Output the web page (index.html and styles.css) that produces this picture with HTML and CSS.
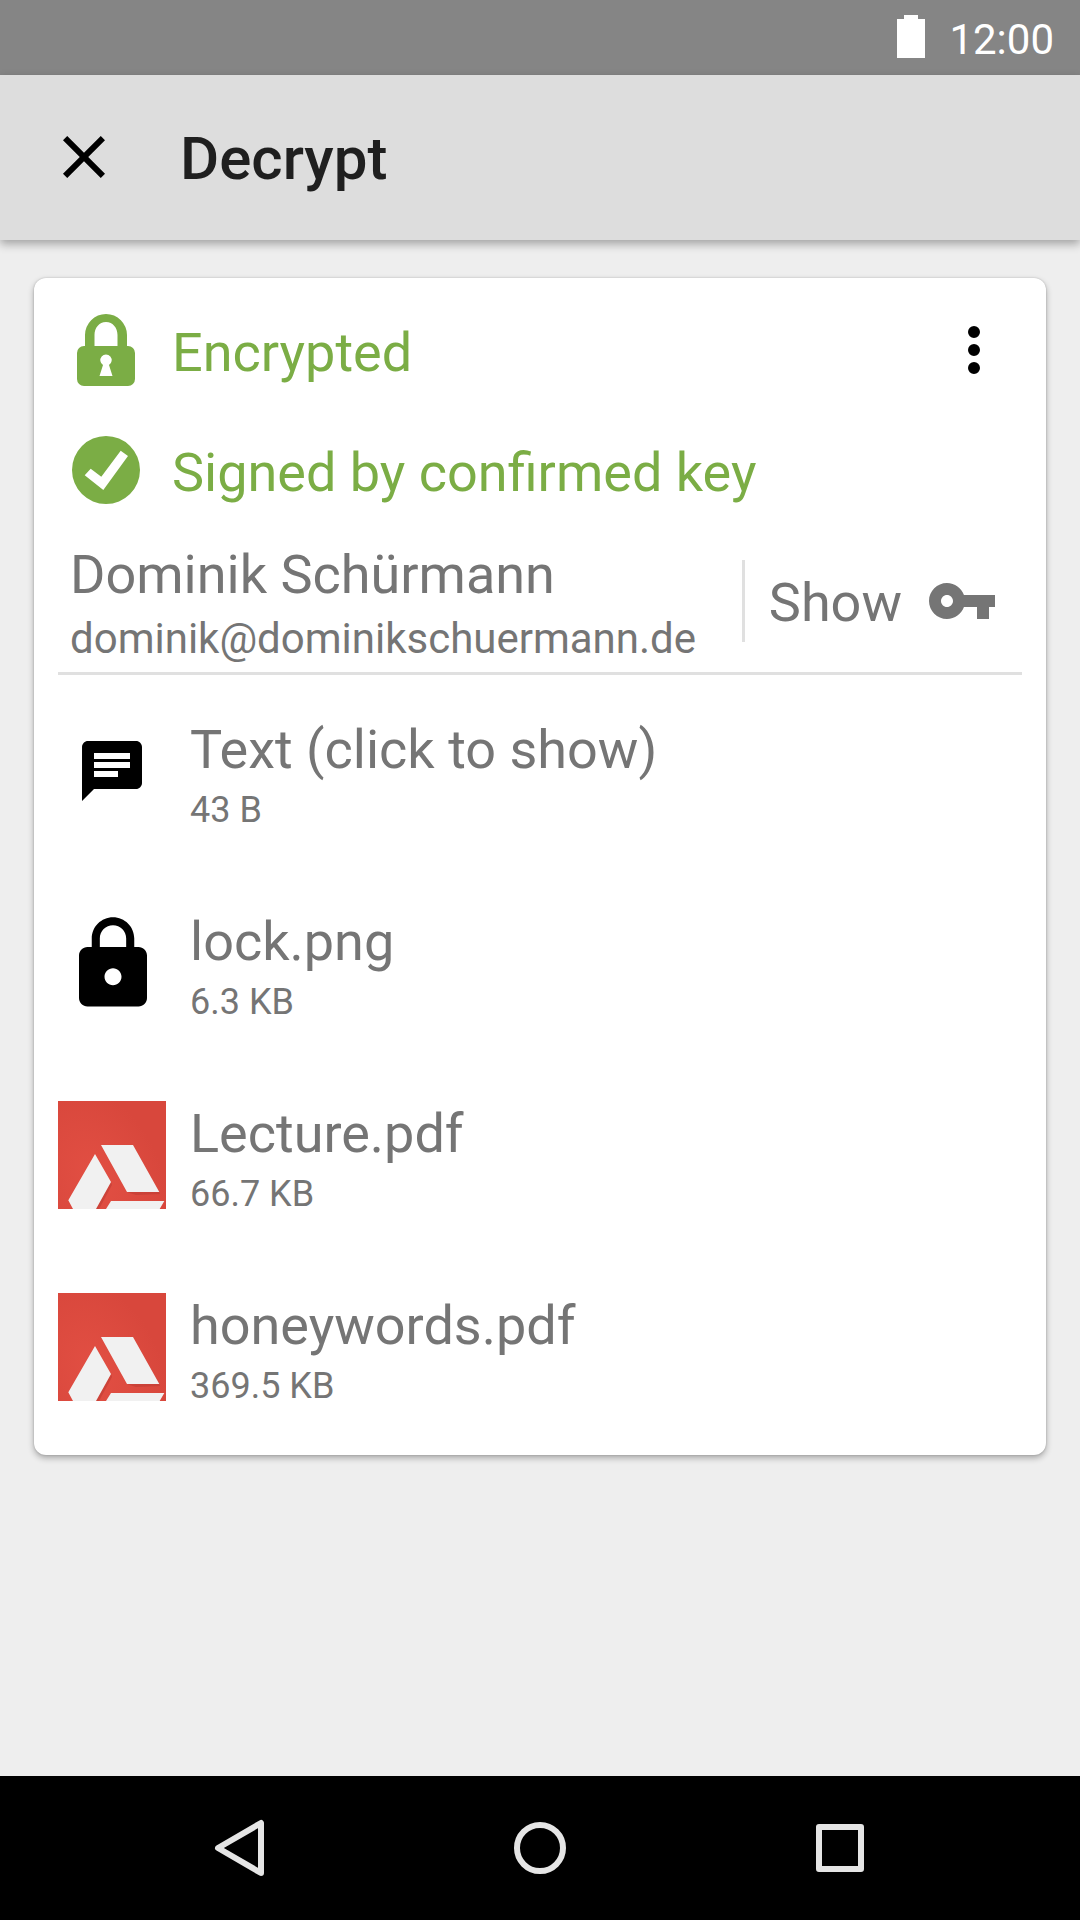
FILE: index.html
```html
<!DOCTYPE html>
<html lang="en">
<head>
  <meta charset="utf-8">
  <meta name="viewport" content="width=device-width, initial-scale=1">
  <title>Decrypt</title>
  <link rel="stylesheet" href="styles.css">
</head>
<body>
  <div class="status-bar">
    <svg class="battery" viewBox="0 0 28 43" aria-hidden="true"><path d="M7 0h14v4h7v39H0V4h7z"/></svg>
    <span class="clock">12:00</span>
  </div>

  <header class="toolbar">
    <button class="icon-button" type="button" aria-label="Close">
      <svg class="icon" viewBox="0 0 24 24"><path d="M19 6.41L17.59 5 12 10.59 6.41 5 5 6.41 10.59 12 5 17.59 6.41 19 12 13.41 17.59 19 19 17.59 13.41 12z"/></svg>
    </button>
    <h1 class="title">Decrypt</h1>
  </header>

  <main class="content">
    <section class="card">
      <div class="status">
        <svg class="icon" viewBox="0 0 72 72" aria-hidden="true">
          <path fill-rule="evenodd" d="M15 32V21a21 21 0 0 1 42 0v11h-9.500V21c0-7-4.500-13-11.500-13s-11.500 6-11.500 13v11zM14 32h44a7 7 0 0 1 7 7v26a7 7 0 0 1-7 7H14a7 7 0 0 1-7-7V39a7 7 0 0 1 7-7zM33 51l-3.500 11h13L39 51a5.700 5.700 0 1 0-6 0z"/>
        </svg>
        <span class="status-label">Encrypted</span>
        <button class="icon-button menu-button" type="button" aria-label="More options">
          <svg class="icon" viewBox="0 0 24 24"><path d="M12 8a2 2 0 1 0 0-4 2 2 0 0 0 0 4zm0 2a2 2 0 1 0 0 4 2 2 0 0 0 0-4zm0 6a2 2 0 1 0 0 4 2 2 0 0 0 0-4z"/></svg>
        </button>
      </div>
      <div class="status">
        <svg class="icon" viewBox="0 0 72 72" aria-hidden="true">
          <path fill-rule="evenodd" d="M36 2a34 34 0 1 0 0 68 34 34 0 0 0 0-68zM20.700 34.700l10.600 8L50.700 16.700 58 22 33.300 56 14.700 41.300z"/>
        </svg>
        <span class="status-label">Signed by confirmed key</span>
      </div>

      <div class="signer">
        <div class="signer-text">
          <div class="primary">Dominik Schürmann</div>
          <div class="email">dominik@dominikschuermann.de</div>
        </div>
        <button class="show-button" type="button">
          <span>Show</span>
          <svg class="icon" viewBox="0 0 24 24" aria-hidden="true"><path d="M12.650 10C11.830 7.670 9.610 6 7 6c-3.310 0-6 2.690-6 6s2.690 6 6 6c2.610 0 4.830-1.670 5.650-4H17v4h4v-4h2v-4H12.650zM7 14c-1.100 0-2-.9-2-2s.9-2 2-2 2 .9 2 2-.9 2-2 2z"/></svg>
        </button>
      </div>

      <ul class="files">
        <li>
          <button class="file" type="button">
            <span class="thumb"><svg class="icon" viewBox="0 0 24 24" aria-hidden="true"><path d="M20 2H4c-1.100 0-1.990.9-1.990 2L2 22l4-4h14c1.100 0 2-.9 2-2V4c0-1.100-.9-2-2-2zM6 6h12v2H6V6zm8 8H6v-2h8v2zm4-3H6V9h12v2z"/></svg></span>
            <span class="file-text"><span class="primary">Text (click to show)</span><span class="size">43 B</span></span>
          </button>
        </li>
        <li>
          <button class="file" type="button">
            <span class="thumb"><svg class="lock-picture" viewBox="0 0 108 108" aria-hidden="true"><path transform="translate(4 4) scale(4.250)" d="M18 8h-1V6c0-2.760-2.240-5-5-5S7 3.240 7 6v2H6c-1.100 0-2 .9-2 2v10c0 1.100.9 2 2 2h12c1.100 0 2-.9 2-2V10c0-1.100-.9-2-2-2zm-6 9c-1.100 0-2-.9-2-2s.9-2 2-2 2 .9 2 2-.9 2-2 2zm3.100-9H8.900V6c0-1.710 1.390-3.100 3.100-3.100s3.100 1.390 3.100 3.100v2z"/></svg></span>
            <span class="file-text"><span class="primary">lock.png</span><span class="size">6.3 KB</span></span>
          </button>
        </li>
        <li>
          <button class="file" type="button">
            <span class="thumb">
              <svg class="pdf-icon" viewBox="0 0 108 108" aria-hidden="true">
                <defs>
                  <radialGradient id="pdf-red" gradientUnits="userSpaceOnUse" cx="50" cy="70" r="95" gradientTransform="rotate(-25 50 70) scale(.7 1)">
                    <stop offset="0" stop-color="#e24f43"/>
                    <stop offset="1" stop-color="#d8473c"/>
                  </radialGradient>
                  <g id="pdf-art">
                    <path fill="url(#pdf-red)" d="M0 0h108v108H0z"/>
                    <path fill="#b93a31" opacity=".5" d="M53 81l1 3-13 24h-4zM69 91h32l1 2-24 1z"/>
                    <path fill="#f1f1f1" d="M43 44h32l26.300 47H69zM37 53l16 28-15 27H15l-4.700-8.700zM53 100h53.300l-4.600 8H48z"/>
                  </g>
                </defs>
                <use href="#pdf-art"/>
              </svg>
            </span>
            <span class="file-text"><span class="primary">Lecture.pdf</span><span class="size">66.7 KB</span></span>
          </button>
        </li>
        <li>
          <button class="file" type="button">
            <span class="thumb"><svg class="pdf-icon" viewBox="0 0 108 108" aria-hidden="true"><use href="#pdf-art"/></svg></span>
            <span class="file-text"><span class="primary">honeywords.pdf</span><span class="size">369.5 KB</span></span>
          </button>
        </li>
      </ul>
    </section>
  </main>

  <nav class="nav-bar" aria-label="System">
    <button class="nav-button" type="button" aria-label="Back">
      <svg class="icon" viewBox="0 0 72 72"><path d="M57 11v50L14 36z"/></svg>
    </button>
    <button class="nav-button" type="button" aria-label="Home">
      <svg class="icon" viewBox="0 0 72 72"><circle cx="36" cy="36" r="23"/></svg>
    </button>
    <button class="nav-button" type="button" aria-label="Recent apps">
      <svg class="icon" viewBox="0 0 72 72"><path d="M15 15h42v42H15z"/></svg>
    </button>
  </nav>
</body>
</html>
```
FILE: styles.css
```css
* {
  box-sizing: border-box;
}

body {
  margin: 0;
  min-height: 100vh;
  display: flex;
  flex-direction: column;
  background: #eee;
  color: #757575;
  font-family: Roboto, sans-serif;
  font-size: 54px;
}

button {
  margin: 0;
  padding: 0;
  border: 0;
  background: none;
  color: inherit;
  font: inherit;
  text-align: left;
  cursor: pointer;
}

svg {
  display: block;
  flex: none;
  fill: currentColor;
}

.icon {
  width: 72px;
  height: 72px;
}

.icon-button {
  flex: none;
  color: #000;
}

/* System status bar */
.status-bar {
  display: flex;
  align-items: center;
  justify-content: flex-end;
  gap: 24px;
  height: 75px;
  padding: 0 26px 2px;
  background: #858585;
  color: #fff;
}

.battery {
  width: 28px;
  height: 43px;
}

.clock {
  padding-top: 6px;
  font-size: 42px;
  line-height: 52px;
}

/* App toolbar */
.toolbar {
  display: flex;
  align-items: center;
  gap: 60px;
  height: 165px;
  padding: 0 48px 2px;
  background: #ddd;
  box-shadow: 0 4px 9px rgba(0, 0, 0, .32);
}

.title {
  margin: 0;
  padding-top: 4px;
  color: #1f1f1f;
  font-size: 60px;
  font-weight: 500;
  line-height: 76px;
}

/* Result card */
.content {
  flex: 1;
  padding: 38px 34px;
}

.card {
  padding: 12px 24px;
  border-radius: 12px;
  background: #fff;
  box-shadow: 0 3px 6px rgba(0, 0, 0, .3), 0 0 2px rgba(0, 0, 0, .2);
}

.status {
  display: flex;
  align-items: center;
  gap: 30px;
  height: 120px;
  padding: 0 12px;
  color: #7bad45;
}

.status-label {
  padding-top: 6px;
  line-height: 76px;
}

.menu-button {
  margin-left: auto;
}

.signer {
  display: flex;
  align-items: center;
  justify-content: space-between;
  padding: 7px 24px 7px 12px;
  border-bottom: 3px solid #e0e0e0;
}

.primary {
  line-height: 76px;
}

.email {
  font-size: 42px;
  line-height: 52px;
}

.show-button {
  display: flex;
  align-items: center;
  gap: 24px;
  height: 82px;
  padding-left: 24px;
  border-left: 3px solid #e0e0e0;
}

.show-button span {
  padding-top: 2px;
}

.files {
  margin: 0;
  padding: 0;
  list-style: none;
}

.file {
  display: flex;
  align-items: center;
  gap: 24px;
  width: 100%;
  height: 192px;
}

.thumb {
  display: grid;
  place-items: center;
  flex: none;
  width: 108px;
  height: 108px;
  color: #000;
}

.pdf-icon,
.lock-picture {
  width: 108px;
  height: 108px;
}

.file-text {
  display: flex;
  flex-direction: column;
  padding-top: 2px;
}

.size {
  font-size: 36px;
  line-height: 44px;
}

/* System navigation bar */
.nav-bar {
  display: grid;
  grid-template-columns: repeat(3, 1fr);
  height: 144px;
  padding: 0 90px;
  background: #000;
}

.nav-button {
  display: grid;
  place-items: center;
}

.nav-button .icon {
  fill: none;
  stroke: #e5e5e5;
  stroke-width: 6px;
  stroke-linejoin: round;
}
```
